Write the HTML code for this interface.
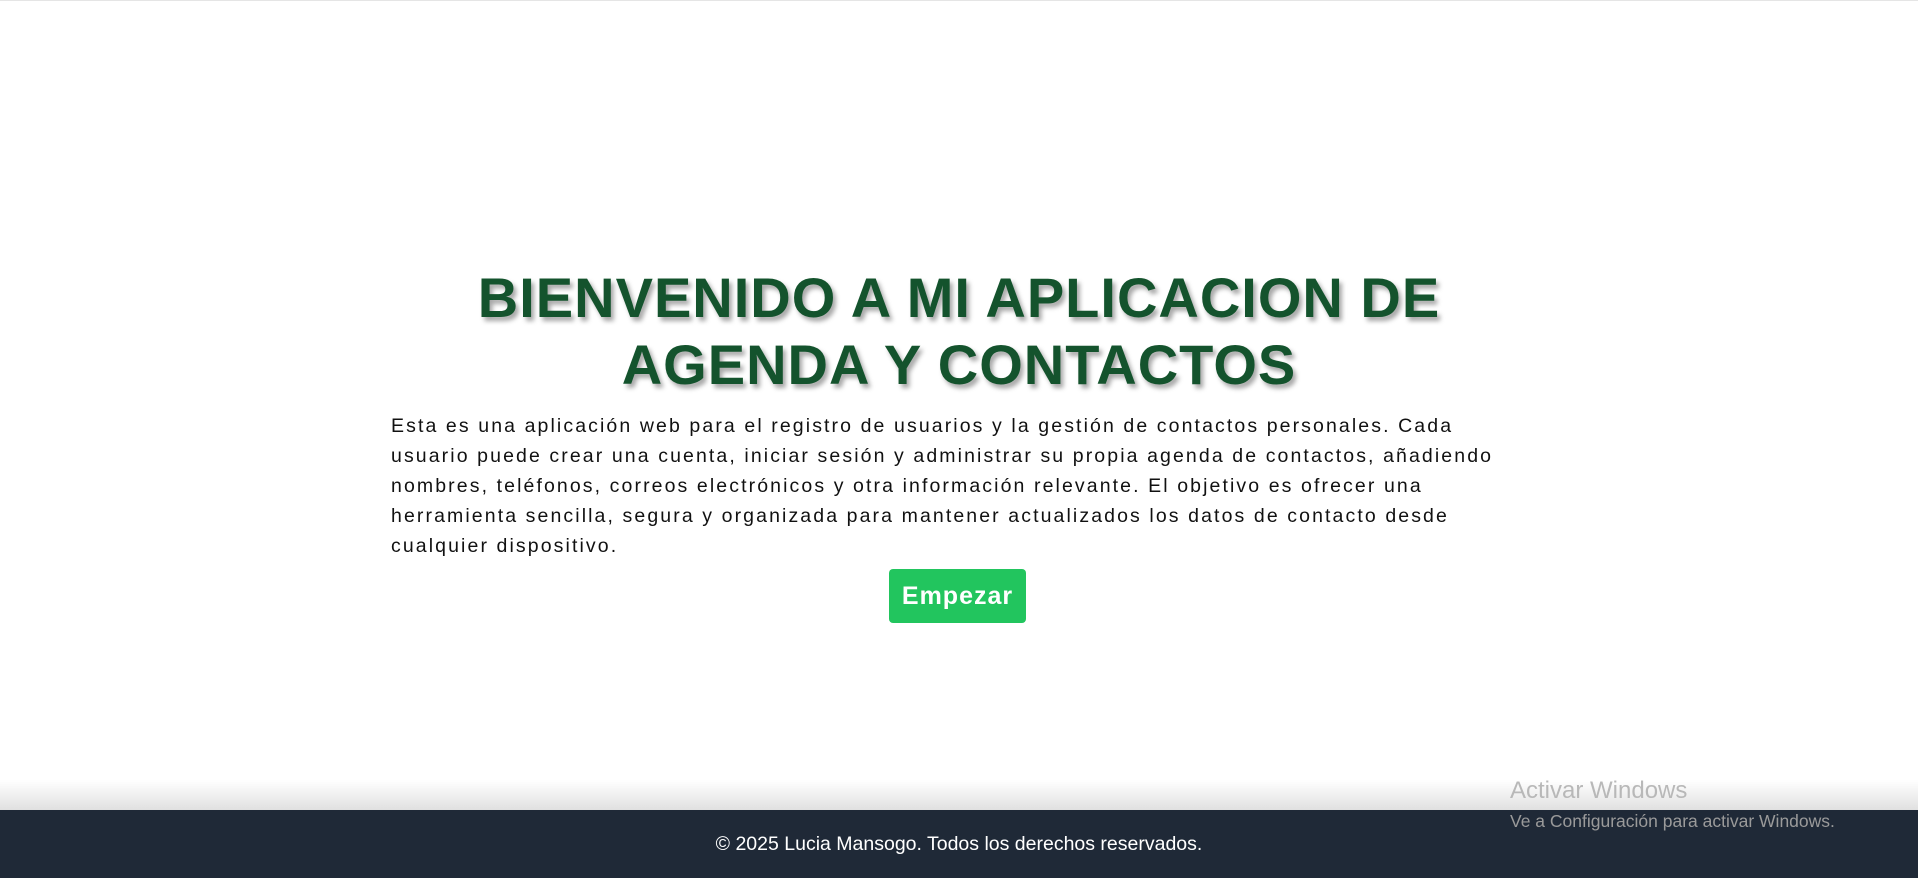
<!DOCTYPE html>
<html><head><meta charset="utf-8"><style>
html,body{margin:0;padding:0;width:1918px;height:878px;overflow:hidden;background:#fff;font-family:"Liberation Sans",sans-serif;position:relative}
.top{position:absolute;top:0;left:0;right:0;height:1px;background:#e5e5e5}
h1{position:absolute;left:0;width:1918px;top:264px;margin:0;text-align:center;font-weight:bold;font-size:56px;line-height:67px;letter-spacing:1px;color:#14532d;text-shadow:3px 4px 5px rgba(0,0,0,.35)}
p{position:absolute;left:391px;top:411px;margin:0;font-size:19.5px;line-height:30px;letter-spacing:2.1px;color:#111;white-space:nowrap}
.btn{position:absolute;left:889px;top:569px;width:137px;height:54px;background:#22c55e;border-radius:4px;color:#fff;font-weight:bold;font-size:25px;letter-spacing:1px;display:flex;align-items:center;justify-content:center}
.shadow{position:absolute;left:0;right:0;top:780px;height:30px;background:linear-gradient(#fff0,#0000001f)}
footer{position:absolute;left:0;top:810px;width:1918px;height:68px;background:#1f2937;color:#fff;font-size:19.5px;display:flex;align-items:center;justify-content:center}
.w1{position:absolute;left:1510px;top:777px;font-size:24px;color:#b8b8b8}
.w2{position:absolute;left:1510px;top:811px;font-size:17.5px;color:#9a9a9a}
</style></head><body>
<div class="top"></div>
<h1>BIENVENIDO A MI APLICACION DE<br>AGENDA Y CONTACTOS</h1>
<p>Esta es una aplicación web para el registro de usuarios y la gestión de contactos personales. Cada<br>usuario puede crear una cuenta, iniciar sesión y administrar su propia agenda de contactos, añadiendo<br>nombres, teléfonos, correos electrónicos y otra información relevante. El objetivo es ofrecer una<br>herramienta sencilla, segura y organizada para mantener actualizados los datos de contacto desde<br>cualquier dispositivo.</p>
<div class="btn">Empezar</div>
<div class="shadow"></div>
<footer>© 2025 Lucia Mansogo. Todos los derechos reservados.</footer>
<div class="w1">Activar Windows</div>
<div class="w2">Ve a Configuración para activar Windows.</div>
</body></html>
